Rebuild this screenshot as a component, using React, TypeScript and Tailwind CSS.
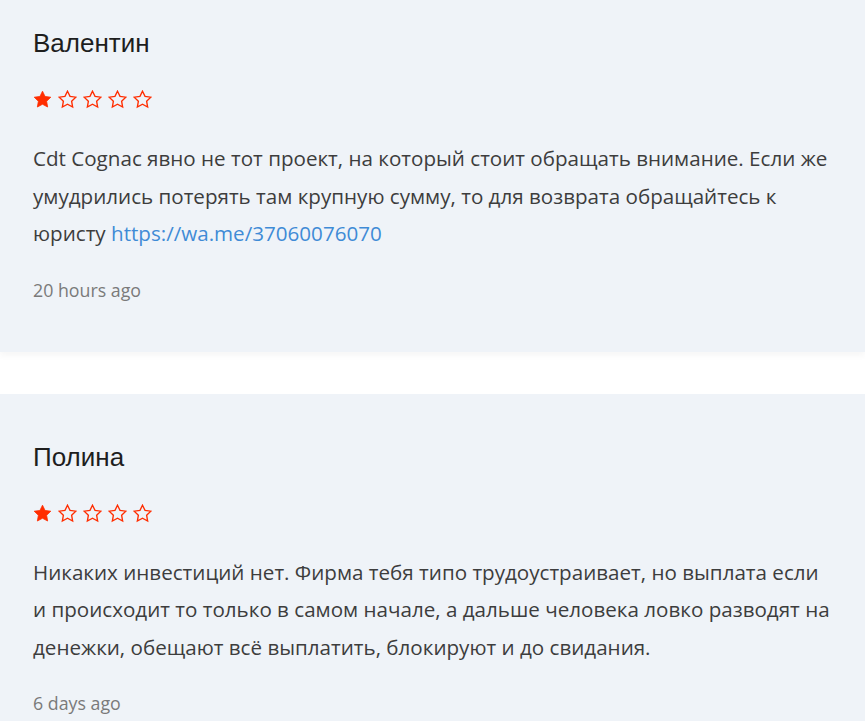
const reviews = [
  {
    name: 'Валентин',
    rating: 1,
    text: 'Cdt Cognac явно не тот проект, на который стоит обращать внимание. Если же умудрились потерять там крупную сумму, то для возврата обращайтесь к юристу ',
    link: 'https://wa.me/37060076070',
    time: '20 hours ago',
  },
  {
    name: 'Полина',
    rating: 1,
    text: 'Никаких инвестиций нет. Фирма тебя типо трудоустраивает, но выплата если и происходит то только в самом начале, а дальше человека ловко разводят на денежки, обещают всё выплатить, блокируют и до свидания.',
    link: null,
    time: '6 days ago',
  },
]

const Star = ({ filled }: { filled: boolean }) => (
  <svg width="19" height="19" viewBox="0 0 24 24" className="shrink-0">
    <polygon
      points="12,1.5 15.2,8.1 22.5,9.1 17.2,14.2 18.5,21.5 12,18 5.5,21.5 6.8,14.2 1.5,9.1 8.8,8.1"
      fill={filled ? '#ff2d00' : 'none'}
      stroke="#ff2d00"
      strokeWidth={filled ? 1 : 1.7}
      strokeLinejoin="miter"
    />
  </svg>
)

const ReviewCard = ({ review }: { review: (typeof reviews)[number] }) => (
  <div className="bg-[#eff3f8] pt-[47px] pb-[49px] pl-[33px] pr-[28px] shadow-[0_4px_6px_rgba(0,0,0,0.035)]">
    <h3 className="font-['Liberation_Sans',Arial,sans-serif] text-[26px] leading-[32px] text-[#1e1e1e]">
      {review.name}
    </h3>
    <div className="mt-[31px] flex gap-[6px]">
      {[1, 2, 3, 4, 5].map((i) => (
        <Star key={i} filled={i <= review.rating} />
      ))}
    </div>
    <p className="mt-[31px] font-['Open_Sans',sans-serif] text-[20.6px] leading-[37.5px] text-[#3d3d3d]">
      {review.text}
      {review.link && (
        <a href={review.link} className="text-[#3f8bd6]">
          {review.link}
        </a>
      )}
    </p>
    <p className="mt-[24px] font-['Open_Sans',sans-serif] text-[17.8px] leading-[26px] text-[#7a7a7a]">
      {review.time}
    </p>
  </div>
)

const App = () => {
  return (
    <div className="min-h-dvh overflow-hidden bg-white">
      <div className="-mt-[20px] flex flex-col gap-[42px]">
        {reviews.map((r) => (
          <ReviewCard key={r.name} review={r} />
        ))}
      </div>
    </div>
  )
}

export default App
